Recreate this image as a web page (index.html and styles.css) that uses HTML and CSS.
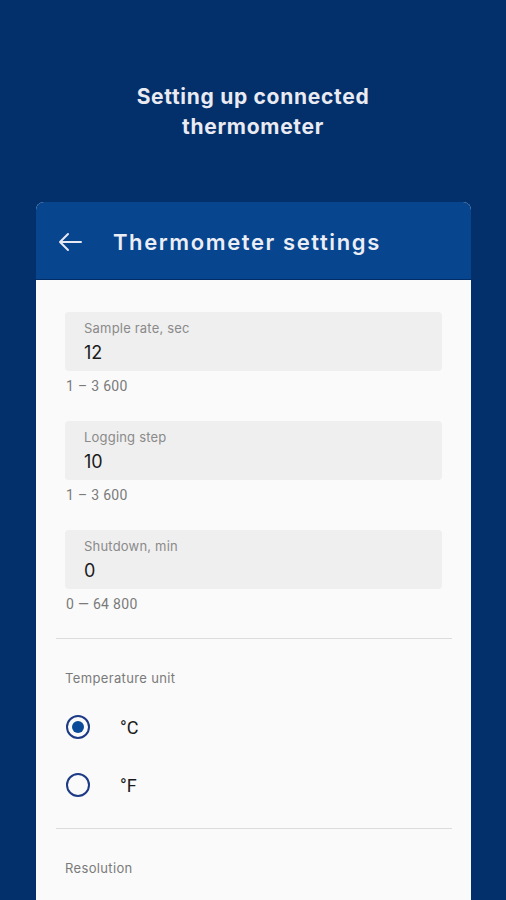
FILE: index.html
```html
<!doctype html>
<html>

<head>
    <title>Thermometer settings</title>
    <link rel="stylesheet" href="styles.css">
</head>

<body>
    <h1 class="intro">Setting up connected<br>thermometer</h1>

    <section class="card">
        <header class="card-header">
            <svg class="back" width="26" height="20" viewBox="0 0 26 20">
                <path d="M24 10H3M11 2L3 10l8 8" fill="none" stroke="#e6e9f2" stroke-width="2" stroke-linecap="round" stroke-linejoin="round"/>
            </svg>
            <span class="card-title">Thermometer settings</span>
        </header>

        <div class="fields">
            <div class="field-group">
                <div class="field">
                    <label>Sample rate, sec</label>
                    <div class="value">12</div>
                </div>
                <div class="hint">1 – 3 600</div>
            </div>
            <div class="field-group">
                <div class="field">
                    <label>Logging step</label>
                    <div class="value">10</div>
                </div>
                <div class="hint">1 – 3 600</div>
            </div>
            <div class="field-group">
                <div class="field">
                    <label>Shutdown, min</label>
                    <div class="value">0</div>
                </div>
                <div class="hint">0 — 64 800</div>
            </div>
        </div>

        <hr class="divider">

        <div class="options">
            <div class="section-label">Temperature unit</div>
            <div class="radio-row">
                <span class="radio checked"></span>
                <span class="radio-label">°C</span>
            </div>
            <div class="radio-row">
                <span class="radio"></span>
                <span class="radio-label">°F</span>
            </div>
        </div>

        <hr class="divider">

        <div class="options">
            <div class="section-label">Resolution</div>
        </div>
    </section>
</body>

</html>
```

FILE: styles.css
```css
body,
html {
    margin: 0;
    padding: 0;
    background: #03306a;
}

* {
    font-family: Inter, Roboto, "Noto Sans", sans-serif;
    box-sizing: border-box;
}

.intro {
    margin: 0;
    padding-top: 82px;
    text-align: center;
    color: #e9eaf2;
    font-size: 21px;
    font-weight: 700;
    letter-spacing: 0.7px;
    line-height: 30px;
}

.card {
    margin: 60px 35px 0 36px;
    background: #fafafa;
    border-radius: 8px 8px 0 0;
    overflow: hidden;
    min-height: 700px;
}

.card-header {
    height: 78px;
    background: #07458e;
    border-bottom: 1px solid #032d66;
    display: flex;
    align-items: center;
    padding-left: 21px;
    padding-top: 3px;
}

.back {
    display: block;
}

.card-title {
    margin-left: 30px;
    color: #eceef5;
    font-size: 22px;
    font-weight: 600;
    letter-spacing: 1.6px;
}

.fields {
    padding: 32px 29px 0;
}

.field-group {
    margin-bottom: 27px;
}

.field-group:last-child {
    margin-bottom: 26px;
}

.field {
    height: 59px;
    background: #efefef;
    border-radius: 4px;
    padding: 8px 19px 0;
}

.field label {
    display: block;
    font-size: 13px;
    letter-spacing: 0.2px;
    line-height: 16px;
    color: #8a8a8a;
}

.field .value {
    margin-top: 6px;
    font-size: 18px;
    line-height: 22px;
    color: #1b1b1b;
}

.hint {
    margin-top: 7px;
    padding-left: 1px;
    font-family: Roboto, sans-serif;
    font-size: 14px;
    letter-spacing: 0.3px;
    line-height: 16px;
    color: #7a7a7a;
}

.divider {
    margin: 0 19px 0 20px;
    border: 0;
    border-top: 1px solid #dcdcdc;
}

.options {
    padding: 31px 29px 14px;
}

.section-label {
    font-size: 13px;
    letter-spacing: 0.35px;
    line-height: 16px;
    color: #7a7a7a;
}

.options .section-label + .radio-row {
    margin-top: 12px;
}

.radio-row {
    height: 58px;
    display: flex;
    align-items: center;
}

.radio {
    width: 24px;
    height: 24px;
    margin-left: 1px;
    border: 2px solid #1c3a86;
    border-radius: 50%;
    display: flex;
    justify-content: center;
    align-items: center;
}

.radio.checked::after {
    content: "";
    width: 12px;
    height: 12px;
    border-radius: 50%;
    background: #0b4a98;
}

.radio-label {
    margin-left: 30px;
    font-family: Roboto, sans-serif;
    font-size: 18px;
    color: #1b1b1b;
}
```
